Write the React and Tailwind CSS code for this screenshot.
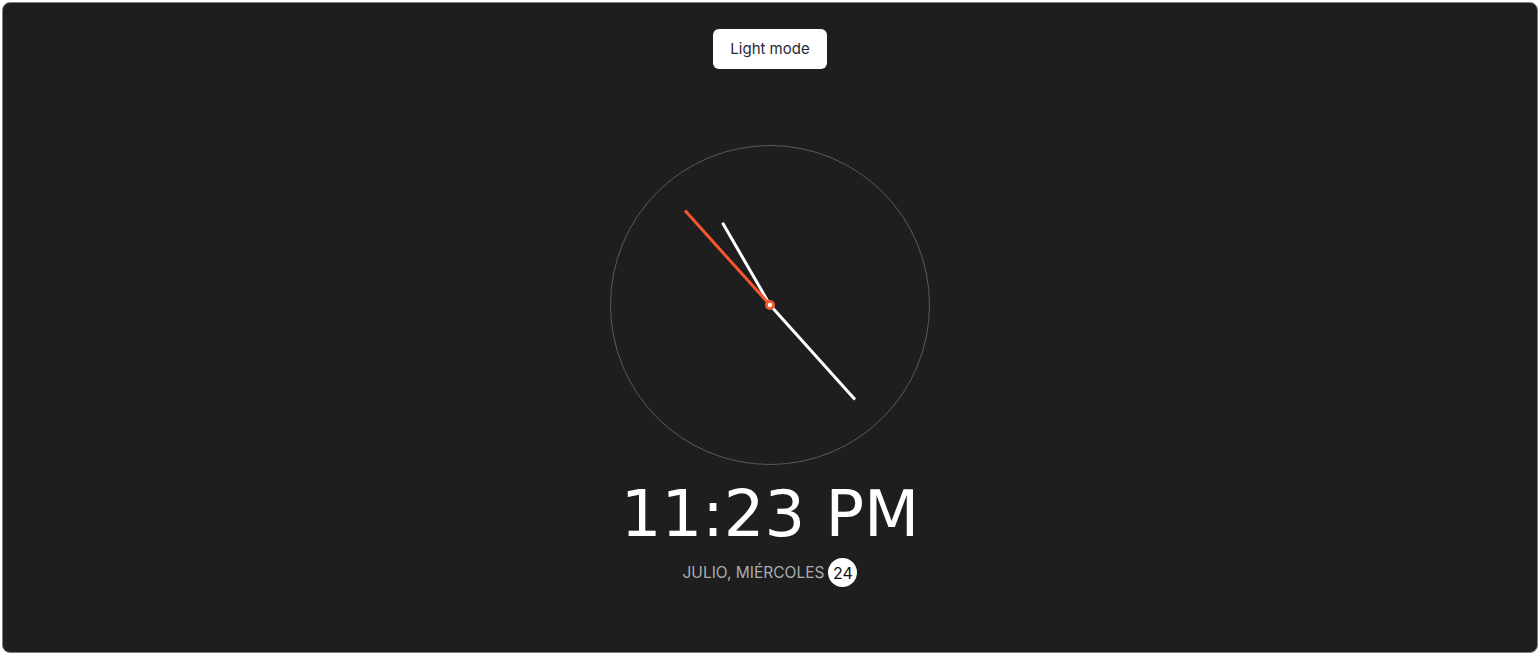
import { useState } from "react";

// static snapshot: 11:23:53 PM
const HOUR = 11;
const MIN = 23;
const SEC = 53;

const handEnd = (deg, len) => {
  const r = (deg * Math.PI) / 180;
  return { x: 160 + len * Math.sin(r), y: 160 - len * Math.cos(r) };
};

const Clock = () => {
  const h = handEnd(HOUR * 30, 95);
  const m = handEnd(MIN * 6, 127);
  const s = handEnd(SEC * 6, 127);

  return (
    <svg width="320" height="320" viewBox="0 0 320 320">
      <circle cx="160" cy="160" r="159.5" fill="none" stroke="#5a5a5a" strokeWidth="1" />
      <line x1="160" y1="160" x2={h.x} y2={h.y} stroke="#ffffff" strokeWidth="3" />
      <line x1="160" y1="160" x2={m.x} y2={m.y} stroke="#ffffff" strokeWidth="3" />
      <line x1="160" y1="160" x2={s.x} y2={s.y} stroke="#f4572b" strokeWidth="3" />
      <circle cx="160" cy="160" r="5" fill="#f4572b" />
      <circle cx="160" cy="160" r="2.2" fill="#ffffff" />
    </svg>
  );
};

export default function App() {
  const [dark, setDark] = useState(true);

  return (
    <div className="h-screen w-full bg-white p-[2px]">
      <div
        className="flex h-full flex-col items-center rounded-lg border border-[#7d7d7d] bg-[#1e1e1e]"
        style={{ fontFamily: "Inter, 'Open Sans', sans-serif" }}
      >
        <button
          onClick={() => setDark(!dark)}
          className="mt-[26px] h-10 rounded-md bg-white px-[17px] text-[15px] text-[#1f2937]"
        >
          Light mode
        </button>

        <div className="mt-[76px]">
          <Clock />
        </div>

        <div
          className="mt-[17px] text-[64px] leading-none text-white"
          style={{ fontFamily: "'DejaVu Sans', sans-serif" }}
        >
          11:23 PM
        </div>

        <div className="mt-[12px] flex items-center gap-1 text-[15.5px] text-[#a9adb3]">
          <span>JULIO, MIÉRCOLES</span>
          <span className="flex h-[29px] w-[29px] items-center justify-center rounded-full bg-white text-[16px] text-[#111]">
            24
          </span>
        </div>
      </div>
    </div>
  );
}
